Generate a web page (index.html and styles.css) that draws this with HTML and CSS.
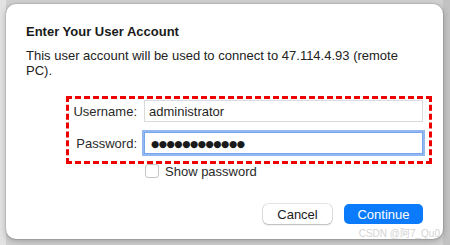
FILE: index.html
```html
<!DOCTYPE html>
<html lang="en">
<head>
    <meta charset="UTF-8">
    <meta name="viewport" content="width=device-width, initial-scale=1.0">
    <title>Enter Your User Account</title>
    <link rel="stylesheet" href="styles.css">
</head>
<body>
    <div class="backdrop">
        <div class="dialog">
            <h1 class="title">Enter Your User Account</h1>
            <p class="desc">This user account will be used to connect to 47.114.4.93 (remote PC).</p>

            <div class="credentials">
                <label class="field-label" for="username">Username:</label>
                <input id="username" class="field" type="text" value="administrator">

                <label class="field-label" for="password">Password:</label>
                <div id="password" class="field focused"><span class="dots">●●●●●●●●●●●●</span></div>
            </div>

            <label class="show-row">
                <span class="checkbox"></span>
                <span class="show-text">Show password</span>
            </label>

            <div class="buttons">
                <button class="btn cancel">Cancel</button>
                <button class="btn continue">Continue</button>
            </div>

            <div class="watermark">CSDN @阿7_Qu0</div>
        </div>
    </div>
</body>
</html>
```

FILE: styles.css
```css
* {
    margin: 0;
    padding: 0;
    box-sizing: border-box;
}

body {
    font-family: "Liberation Sans", Arial, "Noto Sans CJK SC", sans-serif;
    background: #d2d2d2;
    width: 450px;
    height: 245px;
    overflow: hidden;
    color: #1f1f1f;
}

.backdrop {
    height: 245px;
    padding: 4px 0 0 6px;
    background: linear-gradient(90deg, #e2e2e2 0px, #e2e2e2 6px, #d0d0d0 6px, #d0d0d0 443px, #c2c2c2 443px);
}

.dialog {
    position: relative;
    width: 437px;
    height: 235px;
    background: #fff;
    border-radius: 10px;
    box-shadow: 0 0 0 1px rgba(0,0,0,0.08), 0 2px 6px rgba(0,0,0,0.25);
    padding: 20px 20px 0 20px;
}

.title {
    font-size: 13px;
    line-height: 16px;
    font-weight: 700;
    color: #1a1a1a;
}

.desc {
    margin-top: 8px;
    font-size: 13px;
    line-height: 15px;
    color: #222;
}

.credentials {
    margin: 18px 0 0 40px;
    width: 366px;
    border: 3px dashed #ee0000;
    padding: 1px 6px 7px 0;
    display: grid;
    grid-template-columns: 68px 279px;
    column-gap: 7px;
    row-gap: 10px;
    align-items: center;
}

.field-label {
    text-align: right;
    font-size: 13px;
    color: #2a2a2a;
}

.field {
    height: 22px;
    border: 1px solid #dadada;
    background: #fff;
    font-family: inherit;
    font-size: 13px;
    color: #1f1f1f;
    padding: 0 4px;
    outline: none;
    display: flex;
    align-items: center;
}

.field.focused {
    border-color: #78a6ec;
    box-shadow: 0 0 0 2px #93b8f1;
}

.dots {
    font-family: "DejaVu Sans", sans-serif;
    font-size: 9.5px;
    letter-spacing: -0.5px;
    color: #1a1a1a;
    padding-left: 2px;
}

.show-row {
    display: flex;
    align-items: center;
    gap: 6px;
    margin: 0 0 0 119px;
    height: 14px;
}

.checkbox {
    width: 14px;
    height: 14px;
    border: 1px solid #c4c4c4;
    border-radius: 3px;
    background: #fff;
}

.show-text {
    font-size: 13px;
    color: #2a2a2a;
}

.buttons {
    margin-top: 26px;
    display: flex;
    justify-content: flex-end;
    gap: 12px;
}

.btn {
    height: 20px;
    border-radius: 5px;
    font-family: inherit;
    font-size: 13px;
    border: none;
}

.cancel {
    width: 69px;
    background: #fff;
    color: #222;
    box-shadow: 0 0 0 0.5px rgba(0,0,0,0.2), 0 1px 2px rgba(0,0,0,0.2);
}

.continue {
    width: 79px;
    background: #0b7bfb;
    color: #fff;
}

.watermark {
    position: absolute;
    right: 3px;
    bottom: -1px;
    font-size: 10px;
    color: #d4d4d4;
    text-shadow: 0 0 1px #fff;
}
```
